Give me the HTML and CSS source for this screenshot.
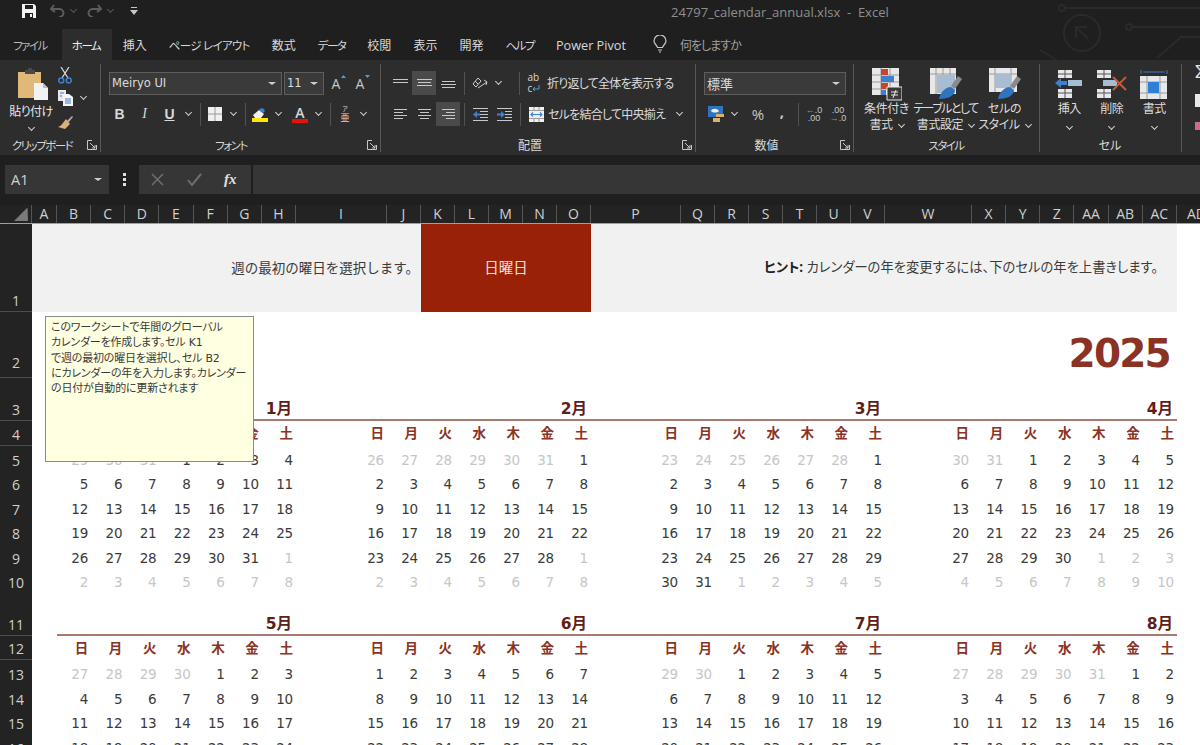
FILE: index.html
```html
<!DOCTYPE html>
<html lang="ja">

<head>
    <meta charset="UTF-8">
    <title>24797_calendar_annual.xlsx - Excel</title>
    <link rel="stylesheet" href="styles.css">
</head>

<body>

    <!-- Title bar -->
    <div class="titlebar">
        <svg class="qat-save" width="14" height="14" viewBox="0 0 14 14"><path d="M0 0h12l2 2v12H0z" fill="#f2f2f2"/><path d="M3 1h8v4H3z" fill="#1f1f1f"/><path d="M3 9h8v5H3z" fill="#1f1f1f"/><path d="M8 10h2v3H8z" fill="#f2f2f2"/></svg>
        <svg class="qat-arrow" width="15" height="13" viewBox="0 0 15 13"><path d="M4 1 1 5l4 3M1.500 5H9a4.500 4 0 0 1 0 8" fill="none" stroke="#5c5c5c" stroke-width="2"/></svg>
        <span class="chev chev-dim"></span>
        <svg class="qat-arrow qat-redo" width="15" height="13" viewBox="0 0 15 13"><path d="M11 1l3 4-4 3M13.500 5H6a4.500 4 0 0 0 0 8" fill="none" stroke="#5c5c5c" stroke-width="2"/></svg>
        <span class="chev chev-dim"></span>
        <svg class="qat-more" width="8" height="8" viewBox="0 0 8 8"><path d="M1 0h6v1H1zM0 3h8L4 8z" fill="#c8c8c8"/></svg>
        <span class="doc-title">24797_calendar_annual.xlsx &nbsp;-&nbsp; Excel</span>
        <svg class="circuit" width="200" height="60" viewBox="0 0 200 60" fill="none" stroke="#2a2a2a" stroke-width="2">
            <circle cx="82" cy="33" r="18"/>
            <path d="M76 38V27h11M76 27l12 12"/>
            <circle cx="62" cy="8" r="3"/>
            <path d="M65 8h135"/>
            <circle cx="129" cy="27" r="3"/>
            <path d="M132 27h68M157 58l24-21h19M40 50 57 60"/>
        </svg>
    </div>

    <!-- Tabs -->
    <div class="tabs">
        <span class="tab tab-file kana">ファイル</span>
        <span class="tab active kana">ホーム</span>
        <span class="tab">挿入</span>
        <span class="tab tab-page">ページ レイアウト</span>
        <span class="tab">数式</span>
        <span class="tab kana">データ</span>
        <span class="tab">校閲</span>
        <span class="tab">表示</span>
        <span class="tab">開発</span>
        <span class="tab kana">ヘルプ</span>
        <span class="tab tab-pivot">Power Pivot</span>
        <svg class="bulb" width="14" height="18" viewBox="0 0 14 18" fill="none" stroke="#c8c8c8" stroke-width="1.200"><path d="M4.500 12.500C4 10 1 9 1 6a6 6 0 0 1 12 0c0 3-3 4-3.500 6.500z"/><path d="M5 15h4M6 17h2"/></svg>
        <span class="tell-me">何をしますか</span>
    </div>

    <!-- Ribbon -->
    <div class="ribbon">

        <div class="group group-clip">
            <div class="group-body clip-body">
                <div class="paste">
                    <svg width="30" height="32" viewBox="0 0 30 32"><path d="M0 4h23v26H0z" fill="#e0b878"/><path d="M7 2h3V0h4v2h3v4H7z" fill="#4a4a4a"/><path d="M16 15h9l5 5v12H16z" fill="#f2f2f2"/><path d="M25 15v5h5" fill="#bdbdbd"/></svg>
                    <span class="paste-label">貼り付け</span>
                    <span class="chev"></span>
                </div>
                <div class="clip-tools">
                    <svg width="14" height="17" viewBox="0 0 14 17" fill="none"><path d="M3 0l7 11M11 0 4 11" stroke="#d8d8d8" stroke-width="1.300"/><circle cx="3.200" cy="13.500" r="2.500" stroke="#3e7fcf" stroke-width="1.500"/><circle cx="10.800" cy="13.500" r="2.500" stroke="#3e7fcf" stroke-width="1.500"/></svg>
                    <div class="copy-line">
                        <svg width="15" height="16" viewBox="0 0 15 16"><path d="M0 0h8v11H0z" fill="#e8e8e8"/><path d="M5 4h6l4 3v9H5z" fill="#f5f5f5"/><path d="M2 3h4M2 6h2M7 9h6M7 11h6M7 13h6" stroke="#3e7fcf"/></svg>
                        <span class="chev"></span>
                    </div>
                    <svg width="15" height="14" viewBox="0 0 15 14"><path d="M9 5 14 0l1 1-5 6z" fill="#b0b0b0"/><path d="M8 3l4 5-5 5-7-2c3-1 5-4 8-8z" fill="#d8b078"/></svg>
                </div>
            </div>
            <div class="group-label kana">クリップボード</div>
            <svg class="launcher" width="10" height="10" viewBox="0 0 10 10" fill="none" stroke="#c8c8c8"><path d="M9.500 5v4.500H.5V.5H5M3 3l5 5M8 5v3H5"/></svg>
        </div>

        <div class="group group-font">
            <div class="group-body">
                <div class="tool-row first">
                    <div class="combo combo-font">Meiryo UI<span class="caret"></span></div>
                    <div class="combo combo-size">11<span class="caret"></span></div>
                    <span class="tool tool-size">A<svg class="size-mark" width="5" height="3" viewBox="0 0 5 3"><path d="M0 3h5L2.500 0z" fill="#5b9bd5"/></svg></span>
                    <span class="tool tool-size">A<svg class="size-mark" width="5" height="3" viewBox="0 0 5 3"><path d="M0 0h5L2.500 3z" fill="#5b9bd5"/></svg></span>
                </div>
                <div class="tool-row tool-row-format">
                    <span class="tool tool-text bold">B</span>
                    <span class="tool tool-text italic">I</span>
                    <span class="tool tool-text under">U</span>
                    <span class="chev-box"><span class="chev"></span></span>
                    <span class="sep"></span>
                    <span class="tool"><svg width="14" height="14" viewBox="0 0 14 14"><path d="M0 0h14v14H0z" fill="#f0f0f0"/><path d="M7 0v14M0 7h14" stroke="#9a9a9a"/></svg></span>
                    <span class="chev-box"><span class="chev"></span></span>
                    <span class="sep"></span>
                    <span class="tool"><svg width="16" height="16" viewBox="0 0 16 16"><path d="M1 9l6-5 5 4-3 4H3z" fill="#f0f0f0"/><path d="M7 4c2-3 5-2 6 1l-2 2z" fill="#3e7fcf"/><path d="M0 12h16v4H0z" fill="#ffe800"/></svg></span>
                    <span class="chev-box"><span class="chev"></span></span>
                    <span class="tool tool-color">A<span class="color-bar"></span></span>
                    <span class="chev-box"><span class="chev"></span></span>
                    <span class="sep"></span>
                    <span class="tool tool-ruby"><small>ア</small>亜</span>
                    <span class="chev-box"><span class="chev"></span></span>
                </div>
            </div>
            <div class="group-label kana">フォント</div>
            <svg class="launcher" width="10" height="10" viewBox="0 0 10 10" fill="none" stroke="#c8c8c8"><path d="M9.500 5v4.500H.5V.5H5M3 3l5 5M8 5v3H5"/></svg>
        </div>

        <div class="group group-align">
            <div class="group-body">
                <div class="tool-row first">
                    <span class="tool"><svg width="15" height="8" viewBox="0 0 15 8" stroke="#c8c8c8"><path d="M0 .5h15M0 3.500h15"/></svg></span>
                    <span class="tool on"><svg width="15" height="8" viewBox="0 0 15 8" stroke="#c8c8c8"><path d="M0 .5h15M1 3.500h13M0 6.500h15"/></svg></span>
                    <span class="tool tool-low"><svg width="15" height="8" viewBox="0 0 15 8" stroke="#c8c8c8"><path d="M1 .5h13M0 3.500h15M1 6.500h13"/></svg></span>
                    <span class="sep"></span>
                    <span class="tool"><svg width="16" height="14" viewBox="0 0 16 14" fill="none" stroke="#d0d0d0"><path d="M1 8l5-6 3 3-5 6zM3 5l3 3M6 12l9-6M12 4l3 2-1 3" /></svg></span>
                    <span class="chev-box"><span class="chev"></span></span>
                    <span class="sep sep-wrap"></span>
                    <span class="tool"><span class="wrap-icon">ab<br>c<svg width="8" height="7" viewBox="0 0 8 7" fill="none" stroke="#5b9bd5"><path d="M7 0v4H1M3 2 1 4l2 2"/></svg></span></span>
                    <span class="ribbon-text">折り返して全体を表示する</span>
                </div>
                <div class="tool-row">
                    <span class="tool"><svg width="13" height="10" viewBox="0 0 13 10" stroke="#c8c8c8"><path d="M0 .5h13M0 3.500h9M0 6.500h13M0 9.500h9"/></svg></span>
                    <span class="tool"><svg width="13" height="10" viewBox="0 0 13 10" stroke="#c8c8c8"><path d="M0 .5h13M2 3.500h9M0 6.500h13M2 9.500h9"/></svg></span>
                    <span class="tool on"><svg width="13" height="10" viewBox="0 0 13 10" stroke="#c8c8c8"><path d="M0 .5h13M4 3.500h9M0 6.500h13M4 9.500h9"/></svg></span>
                    <span class="sep"></span>
                    <span class="tool"><svg width="15" height="13" viewBox="0 0 15 13"><path d="M0 .5h15M7 3.500h8M7 6.500h8M7 9.500h8M0 12.500h15" stroke="#c8c8c8"/><path d="M0 6.500 4 3v2.500h3v2H4V10z" fill="#3e7fcf"/></svg></span>
                    <span class="tool"><svg width="15" height="13" viewBox="0 0 15 13"><path d="M0 .5h15M8 3.500h7M8 6.500h7M8 9.500h7M0 12.500h15" stroke="#c8c8c8"/><path d="M8 6.500 4 3v2.500H0v2h4V10z" fill="#3e7fcf"/></svg></span>
                    <span class="sep"></span>
                    <span class="tool"><svg width="15" height="15" viewBox="0 0 15 15"><path d="M0 0h15v15H0z" fill="#f0f0f0"/><path d="M0 3.500h15M0 11.500h15M5 0v3M10 0v3M5 12v3M10 12v3" stroke="#9a9a9a"/><path d="M2 7.500h11M4 5.500l-2 2 2 2M11 5.500l2 2-2 2" fill="none" stroke="#3e7fcf" stroke-width="1.200"/></svg></span>
                    <span class="ribbon-text merge-text">セルを結合して中央揃え</span>
                    <span class="chev-box"><span class="chev"></span></span>
                </div>
            </div>
            <div class="group-label">配置</div>
            <svg class="launcher" width="10" height="10" viewBox="0 0 10 10" fill="none" stroke="#c8c8c8"><path d="M9.500 5v4.500H.5V.5H5M3 3l5 5M8 5v3H5"/></svg>
        </div>

        <div class="group group-number">
            <div class="group-body">
                <div class="tool-row first">
                    <div class="combo combo-number">標準<span class="caret"></span></div>
                </div>
                <div class="tool-row">
                    <span class="tool"><svg width="16" height="16" viewBox="0 0 16 16"><path d="M0 0h15v11H0z" fill="#2f74c0"/><path d="M3 5c1-3 6-3 8 0-2 2-6 2-8 0z" fill="#f0f0f0"/><path d="M8 8h8v3H8zM5 12h7v4H5z" fill="#d8b078"/></svg></span>
                    <span class="chev-box"><span class="chev"></span></span>
                    <span class="tool tool-pct">%</span>
                    <span class="tool tool-comma">,</span>
                    <span class="sep"></span>
                    <span class="tool tool-dec"><b><i>←</i>.0</b><b>.00</b></span>
                    <span class="tool tool-dec"><b>.00</b><b><i>→</i>.0</b></span>
                </div>
            </div>
            <div class="group-label">数値</div>
            <svg class="launcher" width="10" height="10" viewBox="0 0 10 10" fill="none" stroke="#c8c8c8"><path d="M9.500 5v4.500H.5V.5H5M3 3l5 5M8 5v3H5"/></svg>
        </div>

        <div class="group group-style">
            <div class="group-body big-row">
                <div class="big">
                    <svg width="30" height="32" viewBox="0 0 30 32"><path d="M0 0h27v27H0z" fill="#e8e8e8"/><path d="M9 0v27M18 0v27M0 7h27M0 14h27M0 21h27" stroke="#9a9a9a"/><path d="M9 1h7v6H9zM9 15h7v6H9z" fill="#c8452a"/><path d="M9 8h13v6H9zM9 22h5v5H9z" fill="#3e7fcf"/><path d="M15 19h15v13H15z" fill="#3a3a3a" stroke="#e8e8e8"/><path d="M19 24h7M19 27h7M24 22l-3 8" stroke="#e8e8e8"/></svg>
                    <span class="big-label">条件付き<br>書式<span class="chev chev-in"></span></span>
                </div>
                <div class="big">
                    <svg width="32" height="32" viewBox="0 0 32 32"><path d="M0 0h26v26H0z" fill="#e8e8e8"/><path d="M6 0v26M13 0v26M20 0v26M0 6h26" stroke="#9a9a9a"/><path d="M7 7h18v18H7z" fill="#a8bcd4"/><path d="M21 18 28 8l4 3-7 10z" fill="#8a8a8a"/><path d="M9 31c1-6 6-12 12-12l4 3c0 5-6 9-16 9z" fill="#2f74c0"/></svg>
                    <span class="big-label"><span class="tight">テーブルとして</span><br>書式設定<span class="chev chev-in"></span></span>
                </div>
                <div class="big">
                    <svg width="32" height="32" viewBox="0 0 32 32"><path d="M0 0h28v24H0z" fill="#e8e8e8"/><path d="M6 0v24M22 0v24M0 6h28" stroke="#9a9a9a"/><path d="M6 6h16v14H6z" fill="#a8bcd4"/><path d="M21 18 28 8l4 3-7 10z" fill="#8a8a8a"/><path d="M9 31c1-6 6-12 12-12l4 3c0 5-6 9-16 9z" fill="#2f74c0"/></svg>
                    <span class="big-label">セルの<br>スタイル<span class="chev chev-in"></span></span>
                </div>
            </div>
            <div class="group-label kana">スタイル</div>
        </div>

        <div class="group group-cell">
            <div class="group-body big-row">
                <div class="big">
                    <svg width="28" height="28" viewBox="0 0 28 28"><path d="M3 0h14v8H3zM3 19h14v9H3z" fill="#e8e8e8"/><path d="M10 0v8M3 4h14M10 19v9M3 23h14" stroke="#555"/><path d="M13 10h14v6H13z" fill="#a8bcd4"/><path d="M0 13l6-5v3h6v4H6v3z" fill="#3e7fcf"/></svg>
                    <span class="big-label">挿入<br><span class="chev"></span></span>
                </div>
                <div class="big">
                    <svg width="30" height="28" viewBox="0 0 30 28"><path d="M0 0h14v8H0zM0 19h14v9H0z" fill="#e8e8e8"/><path d="M7 0v8M0 4h14M7 19v9M0 23h14" stroke="#555"/><path d="M6 10h14v6H6z" fill="#a8bcd4"/><path d="M16 7l13 13M29 7 16 20" stroke="#d2552e" stroke-width="2"/></svg>
                    <span class="big-label">削除<br><span class="chev"></span></span>
                </div>
                <div class="big">
                    <svg width="28" height="30" viewBox="0 0 28 30"><path d="M1 1v4M27 1v4M3 3h22" stroke="#3e7fcf" fill="none"/><path d="M0 7h27v23H0z" fill="#e8e8e8"/><path d="M7 7v23M20 7v23M0 13h27M0 24h27" stroke="#9a9a9a"/><path d="M8 13h11v11H8z" fill="#2f7fd6"/></svg>
                    <span class="big-label">書式<br><span class="chev"></span></span>
                </div>
            </div>
            <div class="group-label">セル</div>
        </div>

        <div class="group-edit">
            <span class="edit-sum">Σ</span>
            <span class="edit-fill"></span>
            <span class="edit-clear"></span>
        </div>
    </div>

    <!-- Formula bar -->
    <div class="formula-bar">
        <div class="name-box">A1<span class="caret"></span></div>
        <div class="fx-dots"><i></i><i></i><i></i></div>
        <div class="fx-buttons">
            <svg width="13" height="13" viewBox="0 0 13 13" stroke="#6e6e6e" stroke-width="1.500"><path d="M1 1l11 11M12 1 1 12"/></svg>
            <svg width="15" height="13" viewBox="0 0 15 13" fill="none" stroke="#6e6e6e" stroke-width="2"><path d="M1 7l4 5L14 1"/></svg>
            <span class="fx-label">fx</span>
        </div>
        <div class="fx-input"></div>
    </div>

    <!-- Sheet -->
    <div class="sheet">
        <div class="row col-head">
            <div class="corner"><span class="corner-mark"></span></div>
            <span>A</span><span>B</span><span>C</span><span>D</span><span>E</span><span>F</span><span>G</span><span>H</span><span>I</span><span>J</span><span>K</span><span>L</span><span>M</span><span>N</span><span>O</span><span>P</span><span>Q</span><span>R</span><span>S</span><span>T</span><span>U</span><span>V</span><span>W</span><span>X</span><span>Y</span><span>Z</span><span>AA</span><span>AB</span><span>AC</span><span>AD</span>
        </div>

        <div class="row row-top">
            <div class="rh">1</div>
            <div class="note note-left">週の最初の曜日を選択します。</div>
            <div class="first-day">日曜日</div>
            <div class="note note-right"><b>ヒント:</b> カレンダーの年を変更するには、下のセルの年を上書きします。</div>
        </div>

        <div class="row row-year">
            <div class="rh">2</div>
            <div class="year">2025</div>
        </div>

        <div class="row row-month">
            <div class="rh">3</div>
            <div class="month">1月</div><div class="month">2月</div><div class="month">3月</div><div class="month">4月</div>
        </div>

        <div class="row row-week">
            <div class="rh">4</div>
            <span>日</span><span>月</span><span>火</span><span>水</span><span>木</span><span>金</span><span>土</span>
            <span>日</span><span>月</span><span>火</span><span>水</span><span>木</span><span>金</span><span>土</span>
            <span>日</span><span>月</span><span>火</span><span>水</span><span>木</span><span>金</span><span>土</span>
            <span>日</span><span>月</span><span>火</span><span>水</span><span>木</span><span>金</span><span>土</span>
        </div>

        <div class="row row-date">
            <div class="rh">5</div>
            <span class="off">29</span><span class="off">30</span><span class="off">31</span><span>1</span><span>2</span><span>3</span><span>4</span>
            <span class="off">26</span><span class="off">27</span><span class="off">28</span><span class="off">29</span><span class="off">30</span><span class="off">31</span><span>1</span>
            <span class="off">23</span><span class="off">24</span><span class="off">25</span><span class="off">26</span><span class="off">27</span><span class="off">28</span><span>1</span>
            <span class="off">30</span><span class="off">31</span><span>1</span><span>2</span><span>3</span><span>4</span><span>5</span>
        </div>
        <div class="row row-date">
            <div class="rh">6</div>
            <span>5</span><span>6</span><span>7</span><span>8</span><span>9</span><span>10</span><span>11</span>
            <span>2</span><span>3</span><span>4</span><span>5</span><span>6</span><span>7</span><span>8</span>
            <span>2</span><span>3</span><span>4</span><span>5</span><span>6</span><span>7</span><span>8</span>
            <span>6</span><span>7</span><span>8</span><span>9</span><span>10</span><span>11</span><span>12</span>
        </div>
        <div class="row row-date">
            <div class="rh">7</div>
            <span>12</span><span>13</span><span>14</span><span>15</span><span>16</span><span>17</span><span>18</span>
            <span>9</span><span>10</span><span>11</span><span>12</span><span>13</span><span>14</span><span>15</span>
            <span>9</span><span>10</span><span>11</span><span>12</span><span>13</span><span>14</span><span>15</span>
            <span>13</span><span>14</span><span>15</span><span>16</span><span>17</span><span>18</span><span>19</span>
        </div>
        <div class="row row-date">
            <div class="rh">8</div>
            <span>19</span><span>20</span><span>21</span><span>22</span><span>23</span><span>24</span><span>25</span>
            <span>16</span><span>17</span><span>18</span><span>19</span><span>20</span><span>21</span><span>22</span>
            <span>16</span><span>17</span><span>18</span><span>19</span><span>20</span><span>21</span><span>22</span>
            <span>20</span><span>21</span><span>22</span><span>23</span><span>24</span><span>25</span><span>26</span>
        </div>
        <div class="row row-date">
            <div class="rh">9</div>
            <span>26</span><span>27</span><span>28</span><span>29</span><span>30</span><span>31</span><span class="off">1</span>
            <span>23</span><span>24</span><span>25</span><span>26</span><span>27</span><span>28</span><span class="off">1</span>
            <span>23</span><span>24</span><span>25</span><span>26</span><span>27</span><span>28</span><span>29</span>
            <span>27</span><span>28</span><span>29</span><span>30</span><span class="off">1</span><span class="off">2</span><span class="off">3</span>
        </div>
        <div class="row row-date">
            <div class="rh">10</div>
            <span class="off">2</span><span class="off">3</span><span class="off">4</span><span class="off">5</span><span class="off">6</span><span class="off">7</span><span class="off">8</span>
            <span class="off">2</span><span class="off">3</span><span class="off">4</span><span class="off">5</span><span class="off">6</span><span class="off">7</span><span class="off">8</span>
            <span>30</span><span>31</span><span class="off">1</span><span class="off">2</span><span class="off">3</span><span class="off">4</span><span class="off">5</span>
            <span class="off">4</span><span class="off">5</span><span class="off">6</span><span class="off">7</span><span class="off">8</span><span class="off">9</span><span class="off">10</span>
        </div>

        <div class="row row-month">
            <div class="rh">11</div>
            <div class="month">5月</div><div class="month">6月</div><div class="month">7月</div><div class="month">8月</div>
        </div>

        <div class="row row-week">
            <div class="rh">12</div>
            <span>日</span><span>月</span><span>火</span><span>水</span><span>木</span><span>金</span><span>土</span>
            <span>日</span><span>月</span><span>火</span><span>水</span><span>木</span><span>金</span><span>土</span>
            <span>日</span><span>月</span><span>火</span><span>水</span><span>木</span><span>金</span><span>土</span>
            <span>日</span><span>月</span><span>火</span><span>水</span><span>木</span><span>金</span><span>土</span>
        </div>

        <div class="row row-date">
            <div class="rh">13</div>
            <span class="off">27</span><span class="off">28</span><span class="off">29</span><span class="off">30</span><span>1</span><span>2</span><span>3</span>
            <span>1</span><span>2</span><span>3</span><span>4</span><span>5</span><span>6</span><span>7</span>
            <span class="off">29</span><span class="off">30</span><span>1</span><span>2</span><span>3</span><span>4</span><span>5</span>
            <span class="off">27</span><span class="off">28</span><span class="off">29</span><span class="off">30</span><span class="off">31</span><span>1</span><span>2</span>
        </div>
        <div class="row row-date">
            <div class="rh">14</div>
            <span>4</span><span>5</span><span>6</span><span>7</span><span>8</span><span>9</span><span>10</span>
            <span>8</span><span>9</span><span>10</span><span>11</span><span>12</span><span>13</span><span>14</span>
            <span>6</span><span>7</span><span>8</span><span>9</span><span>10</span><span>11</span><span>12</span>
            <span>3</span><span>4</span><span>5</span><span>6</span><span>7</span><span>8</span><span>9</span>
        </div>
        <div class="row row-date">
            <div class="rh">15</div>
            <span>11</span><span>12</span><span>13</span><span>14</span><span>15</span><span>16</span><span>17</span>
            <span>15</span><span>16</span><span>17</span><span>18</span><span>19</span><span>20</span><span>21</span>
            <span>13</span><span>14</span><span>15</span><span>16</span><span>17</span><span>18</span><span>19</span>
            <span>10</span><span>11</span><span>12</span><span>13</span><span>14</span><span>15</span><span>16</span>
        </div>
        <div class="row row-date">
            <div class="rh">16</div>
            <span>18</span><span>19</span><span>20</span><span>21</span><span>22</span><span>23</span><span>24</span>
            <span>22</span><span>23</span><span>24</span><span>25</span><span>26</span><span>27</span><span>28</span>
            <span>20</span><span>21</span><span>22</span><span>23</span><span>24</span><span>25</span><span>26</span>
            <span>17</span><span>18</span><span>19</span><span>20</span><span>21</span><span>22</span><span>23</span>
        </div>

        <!-- Cell comment -->
        <div class="comment">このワークシートで年間のグローバル<br>カレンダーを作成します。セル K1<br>で週の最初の曜日を選択し、セル B2<br>にカレンダーの年を入力します。カレンダー<br>の日付が自動的に更新されます</div>
    </div>

</body>

</html>
```

FILE: styles.css
```css
/* Basic styling */
html, body {
    height: 745px;
    overflow: hidden;
}

body {
    margin: 0;
    background-color: #1f1f1f;
    color: #d8d8d8;
    font-family: "Open Sans", "Noto Sans CJK JP", sans-serif;
    font-feature-settings: "palt";
    font-size: 12px;
}

svg {
    display: block;
    flex: none;
}

/* Meiryo UI sets kana narrow */
.kana {
    font-size: 11.500px;
    letter-spacing: -1.500px;
}

/* Title bar */
.titlebar {
    position: relative;
    display: flex;
    align-items: center;
    height: 25px;
    box-sizing: border-box;
    padding: 0 0 4px 22px;
}

.qat-save {
    margin-right: 14px;
}

.qat-arrow {
    margin-right: 6px;
}

.qat-redo {
    margin-left: 11px;
}

.qat-more {
    margin-left: 17px;
}

.doc-title {
    position: absolute;
    left: 671px;
    top: 3px;
    color: #8f8f8f;
    font-size: 13px;
    white-space: nowrap;
}

.circuit {
    position: absolute;
    right: 0;
    top: 0;
}

/* Tabs */
.tabs {
    display: flex;
    align-items: center;
    height: 35px;
    padding-left: 3px;
}

.tab {
    display: flex;
    align-items: center;
    height: 31px;
    margin-top: 4px;
    padding: 0 11px;
    white-space: nowrap;
}

.tab-file {
    padding: 0 15px 0 10px;
    color: #b8b8b8;
}

.tab.active {
    padding: 0 11.500px 0 10px;
    background-color: #2d2d2d;
    color: #f0f0f0;
}

.tab-page {
    font-size: 11.500px;
    letter-spacing: -0.700px;
}

.tab-pivot {
    font-size: 12.700px;
}

.bulb {
    margin: 3px 0 0 16px;
}

.tell-me {
    margin: 4px 0 0 13px;
    color: #a0a0a0;
    letter-spacing: -1px;
}

/* Ribbon */
.ribbon {
    display: flex;
    height: 95px;
    background-color: #2d2d2d;
    overflow: hidden;
}

.group {
    position: relative;
    flex: none;
    height: 88px;
    margin-top: 4px;
    border-right: 1px solid #585858;
    box-sizing: border-box;
}

.group-clip { width: 101px; }
.group-font { width: 280px; padding-left: 8px; }
.group-align { width: 315px; padding-left: 7px; }
.group-number { width: 158px; padding-left: 8px; }
.group-style { width: 186px; padding-left: 3px; }
.group-cell { width: 142px; padding-left: 8px; }

.group-body {
    height: 70px;
    padding-top: 3px;
}

.group-label {
    height: 14px;
    line-height: 14px;
    padding-top: 2px;
    text-align: center;
    color: #d8d8d8;
    white-space: nowrap;
}

.group-clip .group-label { margin-left: -16px; }
.group-font .group-label { margin-left: -27px; }
.group-align .group-label { margin-left: -23px; }
.group-number .group-label { margin-left: -24px; }
.group-style .group-label { margin-left: -4px; }
.group-cell .group-label { margin-left: -9px; }

.launcher {
    position: absolute;
    right: 3px;
    bottom: 2px;
}

.chev {
    display: inline-block;
    width: 4px;
    height: 4px;
    margin-top: -3px;
    border-right: 1.500px solid #d0d0d0;
    border-bottom: 1.500px solid #d0d0d0;
    transform: rotate(45deg);
}

.chev-dim {
    border-color: #555;
    margin-top: -2px;
}

.chev-in {
    margin: 0 0 3px 6px;
    vertical-align: middle;
}

.chev-box {
    display: flex;
    align-items: center;
    justify-content: center;
    flex: none;
    width: 12px;
    height: 24px;
}

.caret {
    width: 0;
    height: 0;
    margin-left: auto;
    border-left: 4px solid transparent;
    border-right: 4px solid transparent;
    border-top: 3.500px solid #d0d0d0;
}

/* Clipboard group */
.clip-body {
    display: flex;
    padding-left: 9px;
}

.paste {
    display: flex;
    flex-direction: column;
    align-items: center;
    width: 44px;
    padding-top: 1px;
}

.paste svg {
    margin-left: 3px;
}

.paste-label {
    margin-top: 3px;
    line-height: 18px;
    letter-spacing: -0.500px;
    white-space: nowrap;
    color: #e8e8e8;
}

.paste .chev {
    margin-top: 4px;
}

.clip-tools {
    display: flex;
    flex-direction: column;
    align-items: flex-start;
    gap: 6px;
    padding-left: 5px;
}

.copy-line {
    display: flex;
    align-items: center;
    gap: 8px;
    margin-bottom: 4px;
}

/* Toolbar rows */
.tool-row {
    display: flex;
    align-items: center;
    height: 24px;
    margin-bottom: 6px;
}

.tool-row.first {
    margin-top: 4px;
    margin-bottom: 7px;
}

.tool-row-format {
    margin-left: -2px;
}

.tool-row-format .tool-text {
    width: 25px;
}

.tool {
    display: flex;
    align-items: center;
    justify-content: center;
    flex: none;
    width: 24px;
    height: 24px;
}

.tool.on {
    background-color: #4a4a4a;
}

.tool-low {
    padding-top: 3px;
    box-sizing: border-box;
}

.sep {
    flex: none;
    width: 1px;
    height: 23px;
    margin: 0 3px 0 4px;
    background-color: #525252;
}

.tool-row-format .sep {
    margin: 0 2px 0 6px;
}

.sep-wrap {
    margin-left: 15px;
}

.combo {
    display: flex;
    align-items: center;
    flex: none;
    height: 21px;
    padding: 0 5px 0 2px;
    margin-right: 2px;
    background-color: #3a3a3a;
    border: 1px solid #5e5e5e;
    color: #dcdcdc;
    font-size: 13px;
}

.combo-font {
    width: 164px;
    font-family: "DejaVu Sans", sans-serif;
    font-size: 11.500px;
}

.combo-size {
    width: 31px;
    margin-right: 0;
    font-family: "DejaVu Sans", sans-serif;
    font-size: 11.500px;
}

.combo-number {
    width: 133px;
}

.tool-size {
    position: relative;
    font-size: 14px;
    color: #c8c8c8;
}

.size-mark {
    position: absolute;
    right: 2px;
    top: 4px;
}

.tool-text {
    font-family: "Liberation Sans", sans-serif;
    font-size: 14px;
    color: #d8d8d8;
}

.bold {
    font-weight: bold;
}

.italic {
    font-family: "Liberation Serif", serif;
    font-style: italic;
}

.under {
    text-decoration: underline;
    font-weight: bold;
}

.tool-color {
    flex-direction: column;
    margin-left: 4px;
    font-size: 14px;
    font-weight: 600;
    color: #d8d8d8;
    line-height: 13px;
}

.color-bar {
    width: 16px;
    height: 4px;
    background-color: #e81010;
}

.tool-ruby {
    flex-direction: column;
    font-size: 9px;
    line-height: 9px;
}

.tool-ruby small {
    font-size: 6px;
    line-height: 7px;
}

.ribbon-text {
    color: #dcdcdc;
    font-size: 12px;
    letter-spacing: -0.750px;
    white-space: nowrap;
}

.merge-text {
    flex: none;
    width: 125px;
}

.wrap-icon {
    display: block;
    width: 15px;
    font-size: 10px;
    line-height: 11px;
    color: #d8d8d8;
}

.wrap-icon svg {
    display: inline;
    vertical-align: baseline;
}

.tool-pct {
    margin-left: 6px;
    font-size: 15px;
    color: #c8c8c8;
}

.tool-comma {
    font-size: 15px;
    font-weight: bold;
    color: #c8c8c8;
    padding-bottom: 6px;
    box-sizing: border-box;
}

.tool-dec {
    flex-direction: column;
    align-items: center;
    font-family: "Liberation Sans", sans-serif;
    font-size: 9px;
    line-height: 8px;
}

.tool-dec b {
    font-weight: normal;
    color: #c8c8c8;
}

.tool-dec i {
    font-style: normal;
    color: #5b9bd5;
    font-weight: bold;
}

/* Big ribbon buttons */
.big-row {
    display: flex;
}

.big {
    display: flex;
    flex-direction: column;
    align-items: center;
    flex: none;
    width: 59px;
}

.big svg {
    height: 34px;
}

.big-label {
    line-height: 16px;
    letter-spacing: -0.400px;
    text-align: center;
    white-space: nowrap;
    color: #dcdcdc;
}

.tight {
    letter-spacing: -1.500px;
}

.group-cell .big {
    width: 42.500px;
}

/* Cut-off editing group at the right edge */
.group-edit {
    display: flex;
    flex-direction: column;
    gap: 14px;
    padding: 1px 0 0 13px;
}

.edit-sum {
    font-size: 19px;
    line-height: 20px;
    color: #e8e8e8;
}

.edit-fill {
    width: 12px;
    height: 13px;
    margin-top: -1px;
    background-color: #e8e8e8;
}

.edit-clear {
    width: 12px;
    height: 8px;
    margin-top: 1px;
    background-color: #d06a8a;
}

/* Formula bar */
.formula-bar {
    display: flex;
    height: 29px;
    margin-top: 10px;
}

.name-box {
    display: flex;
    align-items: center;
    width: 91px;
    margin-left: 5px;
    padding: 0 7px 0 6px;
    background-color: #363636;
    font-size: 14.500px;
    color: #d0d0d0;
}

.fx-dots {
    display: flex;
    flex-direction: column;
    align-items: center;
    justify-content: center;
    gap: 2px;
    width: 30px;
}

.fx-dots i {
    width: 3px;
    height: 3px;
    background-color: #e0e0e0;
}

.fx-buttons {
    display: flex;
    align-items: center;
    width: 112px;
    box-sizing: border-box;
    padding-left: 12px;
    gap: 23px;
    background-color: #363636;
}

.fx-label {
    margin-left: -1px;
    font-family: "Liberation Serif", serif;
    font-style: italic;
    font-weight: bold;
    font-size: 15px;
    color: #e0e0e0;
}

.fx-input {
    flex: 1;
    margin-left: 2px;
    background-color: #363636;
}

/* Sheet grid, shared by every row */
.sheet {
    position: relative;
    margin-top: 11px;
    background-color: #fff;
}

.row {
    display: grid;
    grid-template-columns: 32px 25px repeat(7, 34.150px) 91px repeat(6, 34px) 90px repeat(6, 34px) 87px repeat(6, 34.160px) 40px;
    background-color: #fff;
}

.rh + * {
    grid-column-start: 3;
}

.rh {
    display: flex;
    align-items: flex-end;
    justify-content: center;
    box-sizing: border-box;
    background-color: #232323;
    border-bottom: 1px solid #4c4c4c;
    color: #cfcfcf;
    font-size: 14px;
    line-height: 21px;
}

/* Column letters */
.col-head {
    height: 19px;
    background-color: #232323;
    border-bottom: 1px solid #a0a0a0;
    box-sizing: border-box;
}

.col-head span {
    text-align: center;
    border-right: 1px solid #555;
    color: #d0d0d0;
    font-size: 14px;
    line-height: 18px;
    overflow: hidden;
    white-space: nowrap;
}

.corner {
    position: relative;
    border-right: 1px solid #555;
}

.corner-mark {
    position: absolute;
    right: 3px;
    bottom: 2px;
    border-left: 13px solid transparent;
    border-bottom: 13px solid #7a7a7a;
}

/* Row 1 */
.row-top {
    height: 88px;
}

.note {
    display: flex;
    align-items: center;
    justify-content: flex-end;
    box-sizing: border-box;
    padding-bottom: 3px;
    background-color: #f1f1f1;
    color: #3a3a3a;
    font-size: 13.300px;
    white-space: pre;
}

.note b {
    color: #222;
}

.note-left {
    grid-column: 2 / 12;
    padding-right: 2px;
    font-size: 13.500px;
    font-feature-settings: normal;
}

.note-right {
    grid-column: 17 / 31;
    padding-right: 19px;
}

.first-day {
    grid-column: 12 / 17;
    display: flex;
    align-items: center;
    justify-content: center;
    padding-bottom: 3px;
    background-color: #992108;
    color: #f5e0dc;
    font-size: 14.500px;
}

.row-year {
    height: 66px;
}

.row-year .rh {
    padding-bottom: 4px;
}

.year {
    grid-column: 3 / 31;
    padding: 19px 7px 0 0;
    text-align: right;
    color: #8a3324;
    font-family: "DejaVu Sans", sans-serif;
    font-weight: bold;
    font-size: 39px;
    line-height: 46px;
    letter-spacing: -1.800px;
}

/* Month title, spans a whole week */
.row-month {
    height: 43px;
}

.month {
    grid-column: span 7;
    box-sizing: border-box;
    padding: 21px 4px 0 0;
    border-bottom: 2px solid #a87a72;
    text-align: right;
    color: #5e2014;
    font-family: "DejaVu Sans", "Noto Sans CJK JP", sans-serif;
    font-weight: bold;
    font-size: 15.500px;
    line-height: 20px;
}

.rh + .month {
    grid-column: 3 / span 7;
}

.row-week,
.row-date {
    height: 24.500px;
}

.row-week span,
.row-date span {
    padding-right: 3px;
    text-align: right;
    line-height: 24px;
}

.row-week span {
    color: #8a3324;
    font-weight: bold;
    font-size: 13.500px;
}

.row-date span {
    padding-top: 2px;
    color: #3a3a3a;
    font-family: "DejaVu Sans", sans-serif;
    font-size: 13.500px;
    letter-spacing: -0.200px;
}

.row-date .off {
    color: #c6c6c6;
}

/* Cell comment */
.comment {
    position: absolute;
    left: 45px;
    top: 111px;
    width: 209px;
    height: 146px;
    box-sizing: border-box;
    padding: 3px 5px;
    background-color: #ffffe1;
    border: 1px solid #8a8a8a;
    color: #3a3a3a;
    font-family: "DejaVu Sans", "Noto Sans CJK JP", sans-serif;
    font-size: 11px;
    line-height: 15.300px;
    letter-spacing: -0.200px;
    white-space: nowrap;
}
```
